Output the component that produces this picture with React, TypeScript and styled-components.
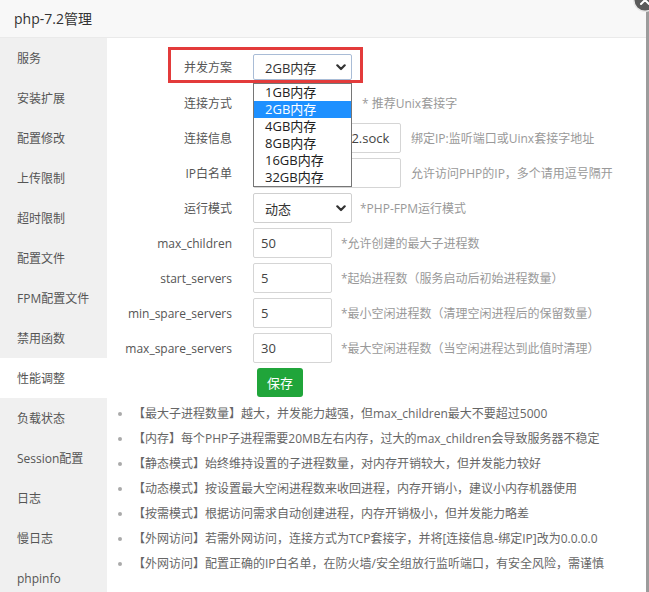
import React from "react";
import styled, { createGlobalStyle } from "styled-components";

const GlobalStyle = createGlobalStyle`
  html, body {
    margin: 0;
    padding: 0;
    background: #fff;
    overflow: hidden;
  }
  body {
    font-family: "Open Sans", "Noto Sans CJK SC", sans-serif;
  }
  * { box-sizing: border-box; }
`;

const Window = styled.div`
  position: relative;
  width: 649px;
  height: 592px;
  border-right: 3px solid #9c9c9c;
  display: flex;
  flex-direction: column;
  background: #fff;
`;

const Header = styled.div`
  height: 38px;
  flex-shrink: 0;
  display: flex;
  align-items: center;
  padding: 0 0 2px 14px;
  background: #f8f8f8;
  border-bottom: 1px solid #eaeaea;
  font-size: 14px;
  color: #333;
`;

const CloseButton = styled.div`
  position: absolute;
  top: -12px;
  right: -11px;
  width: 24px;
  height: 24px;
`;

const Body = styled.div`
  flex: 1;
  display: flex;
  min-height: 0;
`;

const Sidebar = styled.div`
  width: 107px;
  flex-shrink: 0;
  background: #f0f0f0;
`;

const NavItem = styled.div<{ $active?: boolean }>`
  height: 40px;
  display: flex;
  align-items: center;
  padding-left: 17px;
  font-size: 12px;
  color: #555;
  background: ${(p) => (p.$active ? "#fff" : "transparent")};
  white-space: nowrap;
`;

const Main = styled.div`
  flex: 1;
  padding-top: 14px;
  position: relative;
`;

const Row = styled.div<{ $first?: boolean }>`
  position: relative;
  display: flex;
  align-items: center;
  height: 30px;
  margin-bottom: ${(p) => (p.$first ? "6px" : "5px")};
`;

const Label = styled.div`
  width: 125px;
  flex-shrink: 0;
  margin-right: 21px;
  text-align: right;
  font-size: 12px;
  color: #555;
  white-space: nowrap;
`;

const SelectWrap = styled.div`
  position: relative;
`;

const SelectBox = styled.div<{ $h: number; $focus?: boolean }>`
  width: 99px;
  height: ${(p) => p.$h}px;
  border: 1px solid ${(p) => (p.$focus ? "#a9bcd6" : "#cfcfcf")};
  border-radius: 2px;
  display: flex;
  align-items: center;
  justify-content: space-between;
  padding: 0 5px 0 11px;
  font-size: 13px;
  color: #333;
  background: #fff;
`;

const TextInput = styled.input<{ $w: number }>`
  width: ${(p) => p.$w}px;
  height: 30px;
  border: 1px solid #d5d5d5;
  border-radius: 2px;
  padding: 0 7px;
  font-family: "Open Sans", "Noto Sans CJK SC", sans-serif;
  font-size: 13px;
  color: #444;
  background: #fff;
  outline: none;
`;

const Hint = styled.span<{ $gap?: number }>`
  margin-left: ${(p) => p.$gap ?? 9}px;
  font-size: 12px;
  color: #999;
  white-space: nowrap;
`;

const Highlight = styled.div`
  position: absolute;
  left: 61px;
  top: -5px;
  width: 195px;
  height: 36px;
  border: 3px solid #e33b3b;
  pointer-events: none;
`;

const DropList = styled.div`
  position: absolute;
  top: 29px;
  left: 0;
  width: 99px;
  border: 1px solid #767676;
  background: #fff;
  z-index: 10;
`;

const Option = styled.div<{ $selected?: boolean }>`
  height: 17px;
  line-height: 17px;
  padding-left: 11px;
  font-size: 13px;
  color: ${(p) => (p.$selected ? "#fff" : "#222")};
  background: ${(p) => (p.$selected ? "#1e90ff" : "transparent")};
  white-space: nowrap;
`;

const ButtonRow = styled.div`
  padding-left: 150px;
`;

const SaveButton = styled.button`
  width: 46px;
  height: 29px;
  border: none;
  border-radius: 3px;
  background: #20a53a;
  color: #fff;
  font-family: "Open Sans", "Noto Sans CJK SC", sans-serif;
  font-size: 13px;
  padding: 0;
`;

const Notes = styled.ul`
  margin: 4px 0 0;
  padding-left: 26px;
  list-style: disc;
`;

const Note = styled.li`
  font-size: 12px;
  line-height: 25px;
  color: #666;
  white-space: nowrap;
  &::marker {
    color: #aaa;
  }
`;

const Chevron = () => (
  <svg width="10" height="7" viewBox="0 0 10 7">
    <path d="M1.3 1.3 L5 5 L8.7 1.3" fill="none" stroke="#333" strokeWidth="2.2" strokeLinecap="round" strokeLinejoin="round" />
  </svg>
);

const navItems = [
  "服务",
  "安装扩展",
  "配置修改",
  "上传限制",
  "超时限制",
  "配置文件",
  "FPM配置文件",
  "禁用函数",
  "性能调整",
  "负载状态",
  "Session配置",
  "日志",
  "慢日志",
  "phpinfo",
];

const options = ["1GB内存", "2GB内存", "4GB内存", "8GB内存", "16GB内存", "32GB内存"];

const numberRows = [
  { label: "max_children", value: "50", hint: "*允许创建的最大子进程数" },
  { label: "start_servers", value: "5", hint: "*起始进程数（服务启动后初始进程数量）" },
  { label: "min_spare_servers", value: "5", hint: "*最小空闲进程数（清理空闲进程后的保留数量）" },
  { label: "max_spare_servers", value: "30", hint: "*最大空闲进程数（当空闲进程达到此值时清理）" },
];

const notes = [
  "【最大子进程数量】越大，并发能力越强，但max_children最大不要超过5000",
  "【内存】每个PHP子进程需要20MB左右内存，过大的max_children会导致服务器不稳定",
  "【静态模式】始终维持设置的子进程数量，对内存开销较大，但并发能力较好",
  "【动态模式】按设置最大空闲进程数来收回进程，内存开销小，建议小内存机器使用",
  "【按需模式】根据访问需求自动创建进程，内存开销极小，但并发能力略差",
  "【外网访问】若需外网访问，连接方式为TCP套接字，并将[连接信息-绑定IP]改为0.0.0.0",
  "【外网访问】配置正确的IP白名单，在防火墙/安全组放行监听端口，有安全风险，需谨慎",
];

export default function App() {
  return (
    <>
      <GlobalStyle />
      <Window>
        <Header>php-7.2管理</Header>
        <CloseButton>
          <svg width="24" height="24" viewBox="0 0 24 24">
            <circle cx="12" cy="12" r="11.2" fill="#5b5b5b" stroke="#e8e8e8" strokeWidth="1.4" />
            <path d="M8 8 L16 16 M16 8 L8 16" stroke="#fff" strokeWidth="2" strokeLinecap="round" />
          </svg>
        </CloseButton>
        <Body>
          <Sidebar>
            {navItems.map((n) => (
              <NavItem key={n} $active={n === "性能调整"}>
                {n}
              </NavItem>
            ))}
          </Sidebar>
          <Main>
            <Row $first>
              <Highlight />
              <Label>并发方案</Label>
              <SelectWrap>
                <SelectBox $h={26} $focus>
                  <span>2GB内存</span>
                  <Chevron />
                </SelectBox>
                <DropList>
                  {options.map((o) => (
                    <Option key={o} $selected={o === "2GB内存"}>
                      {o}
                    </Option>
                  ))}
                </DropList>
              </SelectWrap>
            </Row>
            <Row>
              <Label>连接方式</Label>
              <SelectBox $h={30}>
                <span />
                <Chevron />
              </SelectBox>
              <Hint $gap={10}>* 推荐Unix套接字</Hint>
            </Row>
            <Row>
              <Label>连接信息</Label>
              <TextInput $w={148} defaultValue="/tmp/php-cgi-72.sock" />
              <Hint $gap={10}>绑定IP:监听端口或Uinx套接字地址</Hint>
            </Row>
            <Row>
              <Label>IP白名单</Label>
              <TextInput $w={148} defaultValue="" />
              <Hint $gap={10}>允许访问PHP的IP，多个请用逗号隔开</Hint>
            </Row>
            <Row>
              <Label>运行模式</Label>
              <SelectBox $h={30}>
                <span>动态</span>
                <Chevron />
              </SelectBox>
              <Hint $gap={8}>*PHP-FPM运行模式</Hint>
            </Row>
            {numberRows.map((r) => (
              <Row key={r.label}>
                <Label>{r.label}</Label>
                <TextInput $w={79} defaultValue={r.value} />
                <Hint>{r.hint}</Hint>
              </Row>
            ))}
            <ButtonRow>
              <SaveButton>保存</SaveButton>
            </ButtonRow>
            <Notes>
              {notes.map((n, i) => (
                <Note key={i}>{n}</Note>
              ))}
            </Notes>
          </Main>
        </Body>
      </Window>
    </>
  );
}
